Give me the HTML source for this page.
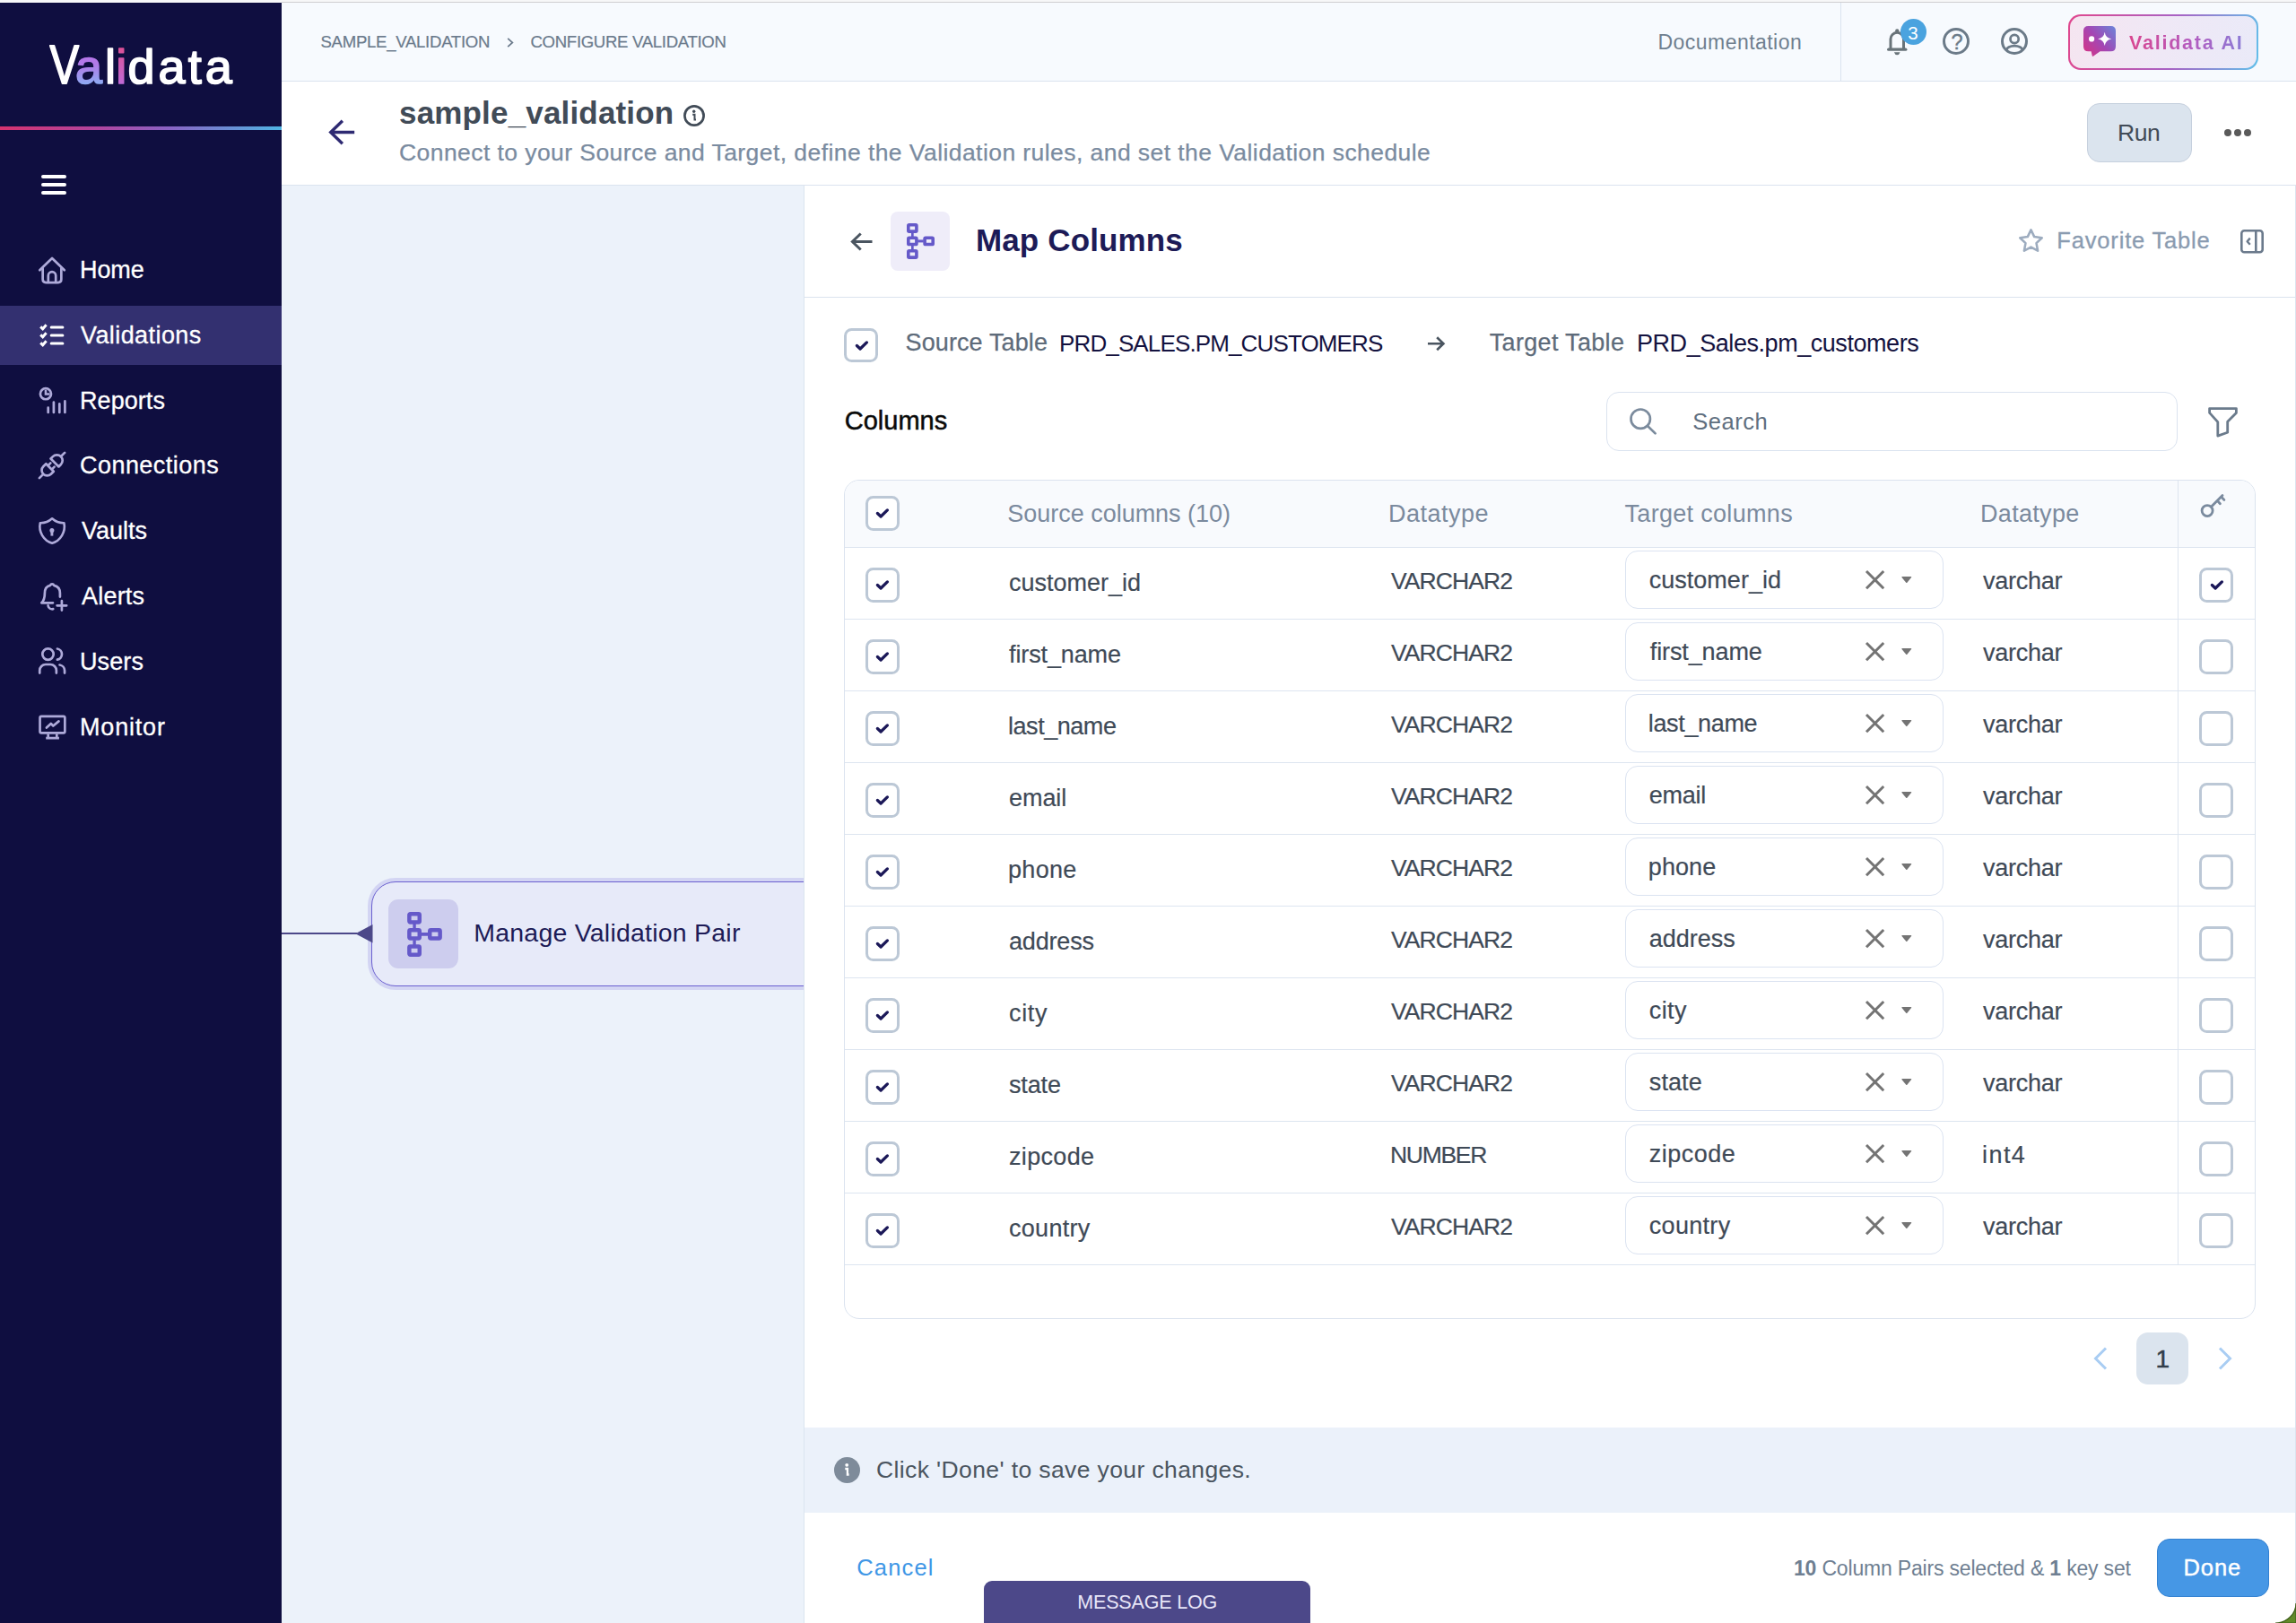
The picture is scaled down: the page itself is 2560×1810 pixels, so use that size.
<!DOCTYPE html><html lang="en"><head><meta charset="utf-8"><title>Validata - Map Columns</title><style>

*{box-sizing:border-box;margin:0;padding:0}
html,body{width:2560px;height:1810px;overflow:hidden;background:#fff}
body{position:relative;font-family:"Liberation Sans",sans-serif;-webkit-font-smoothing:antialiased}
.a{position:absolute}
.t{position:absolute;white-space:nowrap;line-height:1}
svg{position:absolute;overflow:visible}
.cb{position:absolute;width:38px;height:39px;border:3px solid #bcc8d6;border-radius:8.5px;background:#fff}
.sel{position:absolute;left:1812px;width:354.5px;height:64.5px;border:1.5px solid #dbe3f1;border-radius:14px;background:#fff}
.rl{position:absolute;left:942px;width:1572px;height:1px;background:#dde5f0}

</style></head><body>
<div class="a" style="left:0;top:0;width:2560px;height:3px;background:#f7f7f8"></div>
<div class="a" style="left:314px;top:2px;width:2246px;height:1px;background:#cfcfd1"></div>
<div class="a" style="left:0;top:3px;width:314px;height:1807px;background:#0f0e40"></div>
<div class="a" style="left:0;top:141px;width:314px;height:4px;background:linear-gradient(90deg,#d6336f 0%,#b0459f 35%,#8a63c4 60%,#4fb4e3 100%)"></div>
<div class="a" style="left:0;top:341px;width:314px;height:66px;background:#333070"></div>
<div class="a" style="left:46px;top:195px;width:28px;height:4px;border-radius:2px;background:#fff"></div>
<div class="a" style="left:46px;top:204px;width:28px;height:4px;border-radius:2px;background:#fff"></div>
<div class="a" style="left:46px;top:213px;width:28px;height:4px;border-radius:2px;background:#fff"></div>
<div class="a" style="left:314px;top:3px;width:2246px;height:87px;background:#f7fafe"></div>
<div class="a" style="left:314px;top:90px;width:2246px;height:1px;background:#dbe3ef"></div>
<div class="a" style="left:2052px;top:3px;width:1px;height:87px;background:#dbe3ef"></div>
<div class="a" style="left:314px;top:91px;width:2246px;height:115px;background:#fff"></div>
<div class="a" style="left:314px;top:206px;width:2246px;height:1px;background:#dbe3ef"></div>
<div class="a" style="left:314px;top:207px;width:582px;height:1603px;background:#ecf2fa"></div>
<div class="a" style="left:896px;top:207px;width:1664px;height:1603px;background:#fff;border-left:1px solid #dbe4ef"></div>
<div class="a" style="left:2559px;top:206px;width:1px;height:1604px;background:#dbe4ef"></div>
<div class="a" style="left:897px;top:331px;width:1662px;height:1px;background:#dbe3ef"></div>
<svg style="left:0;top:0" width="314" height="900" viewBox="0 0 314 900"><g fill="none" stroke="#aeaad9" stroke-width="2.7" stroke-linecap="round" stroke-linejoin="round"><path d="M44.3 301.3 L58.05 288 L71.8 301.3"/><path d="M47.65 299.6 V311.6 Q47.65 315.05 51.1 315.05 H64.9 Q68.35 315.05 68.35 311.6 V299.6"/><path d="M53.8 314.8 V307.4 A4.2 4.2 0 0 1 62.2 307.4 V314.8"/><circle cx="50.95" cy="439.2" r="6.05"/><path d="M50.95 434.8 V439.5 H55.4" stroke-width="2.5" stroke-linecap="butt" stroke-linejoin="miter"/><path d="M53.7 454.7 V459.9 M59.9 448.6 V459.9 M66.3 450.4 V459.9 M72.4 447.4 V459.9"/><g transform="translate(43.9 533.1) rotate(-45)"><path d="M0 0 H6"/><path d="M16.5 -6 H12.2 A6 6 0 0 0 12.2 6 H16.5 Z"/><path d="M16.8 -3 H20.6 M16.8 3 H20.6"/><path d="M24.2 -6.3 H27.6 A6.3 6.3 0 0 1 27.6 6.3 H24.2 Z"/><path d="M34 0 H39.9"/></g><path d="M58.1 578.3 A19 19 0 0 0 71.4 583.2 A19.5 19.5 0 0 1 58.1 605.8 A19.5 19.5 0 0 1 44.8 583.2 A19 19 0 0 0 58.1 578.3 Z" stroke-width="2.6"/><circle cx="57.9" cy="591.6" r="2.5" fill="#aeaad9" stroke="none"/><path d="M57.9 592 V597.6" stroke-linecap="butt" stroke-width="2.9"/><path d="M66.9 665.6 V661.5 C66.9 656.5 64 653.7 60.2 652.9 C59.5 650.9 56.7 650.9 56 652.9 C52.3 653.7 49.9 656.5 49.9 661.5 C49.9 667 48.9 670 46.3 672.3 H59"/><path d="M53.6 675.4 C54.2 678.6 57 679.6 59.2 679.2"/><path d="M63.6 675.3 H74.2 M68.9 670 V680.6"/><circle cx="53.5" cy="729.6" r="6.2"/><path d="M44.25 750.6 V747.6 A6.6 6.6 0 0 1 50.85 741 H56.25 A6.6 6.6 0 0 1 62.85 747.6 V750.6"/><path d="M63.9 723.5 A6.2 6.2 0 0 1 63.9 735.7"/><path d="M66.5 741.5 A6.6 6.6 0 0 1 72.05 747.8 V750.6"/><rect x="44.55" y="798.85" width="27.8" height="18.6" rx="1.6"/><path d="M53.7 818.5 V823 M63.3 818.5 V823 M51.2 823.1 H65.9" stroke-linecap="butt"/><path d="M51.9 811.5 L56.8 807 L59.3 809.5 L65.5 804.4"/></g><g fill="none" stroke="#fff" stroke-width="3" stroke-linecap="round" stroke-linejoin="miter"><path d="M57.2 364.9 H69.9"/><path d="M45.2 364.4 L47.7 366.8 L51.6 362.3" stroke-linecap="butt"/><path d="M57.2 373.9 H69.9"/><path d="M45.2 373.4 L47.7 375.8 L51.6 371.3" stroke-linecap="butt"/><path d="M57.2 382.9 H69.9"/><path d="M45.2 382.4 L47.7 384.8 L51.6 380.3" stroke-linecap="butt"/></g></svg>
<svg style="left:365.6px;top:133.4px" width="29.2" height="29" viewBox="0 0 29.2 29" ><path d="M29.2 14.5 H2.72 M15.86 1.7 L2.72 14.5 L15.86 27.3" fill="none" stroke="#2e2a72" stroke-width="3.4" stroke-linejoin="miter"/></svg>
<svg style="left:761.5px;top:116.5px" width="24" height="24" viewBox="0 0 24 24"><circle cx="12" cy="12" r="10.6" fill="none" stroke="#414b57" stroke-width="2.7"/><circle cx="11.7" cy="7.2" r="1.7" fill="#414b57"/><path d="M10.2 10.8 H12.5 V16.4 H14" fill="none" stroke="#414b57" stroke-width="2"/></svg>
<svg style="left:565px;top:41.5px" width="8" height="11" viewBox="0 0 8 11"><path d="M1.2 0.8 L6.4 5.5 L1.2 10.2" fill="none" stroke="#6b7a8c" stroke-width="1.7"/></svg>
<svg style="left:2103.65px;top:31.9px" width="22.5" height="29.2" viewBox="0 0 22.5 29.2"><g fill="none" stroke="#687379" stroke-linecap="round" stroke-linejoin="round"><path d="M4 21.8 V11.6 A7.25 7.25 0 0 1 18.5 11.6 V21.8" stroke-width="3"/><path d="M1.7 23.2 H20.8" stroke-width="3.3"/></g><circle cx="11.25" cy="2.3" r="2.1" fill="#687379"/><path d="M7.9 26.2 H14.6 Q13.6 29.2 11.25 29.2 Q8.9 29.2 7.9 26.2 Z" fill="#687379"/></svg>
<div class="a" style="left:2119px;top:21px;width:29px;height:29px;border-radius:50%;background:#4aa3df"></div>
<div class="a" style="left:2166px;top:31px;width:30px;height:30px;border-radius:50%;border:3px solid #6b7a88"></div>
<svg style="left:2231px;top:31px" width="30" height="30" viewBox="0 0 30 30"><defs><clipPath id="uc"><circle cx="15" cy="15" r="14"/></clipPath></defs><g fill="none" stroke="#6b7a88"><circle cx="15" cy="15" r="13.5" stroke-width="3"/><circle cx="15.1" cy="12.5" r="4.6" stroke-width="2.7"/><ellipse cx="15.1" cy="24.7" rx="8.8" ry="4.6" stroke-width="2.7" clip-path="url(#uc)"/></g></svg>
<div class="a" style="left:2306px;top:16px;width:212px;height:62px;border-radius:14px;background:linear-gradient(100deg,#e0468d 0%,#a862c4 55%,#62c0ea 100%)"></div>
<div class="a" style="left:2307.7px;top:17.7px;width:208.6px;height:58.6px;border-radius:12.4px;background:linear-gradient(100deg,#f5e5f0 0%,#efe8f6 50%,#eaeaf8 100%)"></div>
<svg style="left:2323px;top:28.9px" width="36" height="34" viewBox="0 0 36 34"><defs><linearGradient id="cg" x1="0" y1="0.9" x2="1" y2="0.1"><stop offset="0" stop-color="#d63384"/><stop offset="0.5" stop-color="#a347b4"/><stop offset="1" stop-color="#6f7fd6"/></linearGradient></defs><path d="M5.5 0 H30.5 Q36 0 36 5.5 V22.7 Q36 28.2 30.5 28.2 H18.6 L11.2 33.6 Q10 34.4 9.7 33 L8.6 28.2 H5.5 Q0 28.2 0 22.7 V5.5 Q0 0 5.5 0 Z" fill="url(#cg)"/><circle cx="9.1" cy="14.4" r="3.1" fill="#fff"/><path d="M23.7 6.8 Q24.6 13.4 31.3 14.4 Q24.6 15.4 23.7 22 Q22.8 15.4 16.1 14.4 Q22.8 13.4 23.7 6.8 Z" fill="#fff"/></svg>
<div class="a" style="left:2327px;top:115px;width:117px;height:66px;border-radius:14px;background:#dbe4ee;border:1.5px solid #c6d0de"></div>
<div class="a" style="left:2480px;top:143.5px;width:8px;height:8px;border-radius:50%;background:#5a5a5a"></div>
<div class="a" style="left:2491px;top:143.5px;width:8px;height:8px;border-radius:50%;background:#5a5a5a"></div>
<div class="a" style="left:2502px;top:143.5px;width:8px;height:8px;border-radius:50%;background:#5a5a5a"></div>
<svg style="left:54px;top:30px" width="220" height="80" viewBox="0 0 220 80"><defs><linearGradient id="lga" x1="0.2" y1="0" x2="0.35" y2="1"><stop offset="0" stop-color="#c565ea"/><stop offset="0.5" stop-color="#b07be8"/><stop offset="1" stop-color="#78c8fa"/></linearGradient><linearGradient id="lgi" x1="0" y1="0" x2="0" y2="1"><stop offset="0" stop-color="#e8467f"/><stop offset="0.4" stop-color="#d458a8"/><stop offset="1" stop-color="#b772ea"/></linearGradient></defs><text y="63" font-family="Liberation Sans, sans-serif" font-size="54" stroke-width="1.7" stroke-linejoin="round" fill="#fff" stroke="#fff" x="1.4 30 63 75.3 88.6 122.5 155.8 174.8"><tspan font-size="60.5" stroke-width="1.9" textLength="32.6" lengthAdjust="spacingAndGlyphs">V</tspan><tspan fill="url(#lga)" stroke="url(#lga)">a</tspan>l<tspan fill="url(#lgi)" stroke="url(#lgi)">i</tspan>data</text></svg>
<div class="a" style="left:314px;top:207px;width:582px;height:1603px;overflow:hidden">
<div class="a" style="left:0;top:833px;width:84px;height:2px;background:#4c4889"></div>
<div class="a" style="left:96px;top:772px;width:600px;height:125px;border-radius:31px;background:#d3d5f3"></div>
<div class="a" style="left:100px;top:776px;width:600px;height:117px;border-radius:27px;background:#e7eaf9;border:1.5px solid #6a5fd0"></div>
<div class="a" style="left:119px;top:796px;width:78px;height:77px;border-radius:11px;background:#cdcdee"></div>
<svg style="left:140px;top:810px" width="39" height="50" viewBox="0 0 31 40" ><g fill="none" stroke="#6559c9" stroke-width="3.58" stroke-linejoin="round"><rect x="1.79" y="1.79" width="9.12" height="7.32" rx="0.9"/><rect x="1.79" y="16.24" width="9.12" height="7.32" rx="0.9"/><rect x="1.79" y="30.79" width="9.12" height="7.32" rx="0.9"/><rect x="20.09" y="16.24" width="9.12" height="7.32" rx="0.9"/><path d="M6.35 10.4 V15 M6.35 24.9 V29.5" stroke-width="2.7"/><path d="M12.2 19.9 H18.8" stroke-width="3"/></g></svg>
<svg style="left:81.5px;top:824px" width="19.5" height="20.6" viewBox="0 0 19.5 20.6"><path d="M0.3 10.3 L19.5 0 L19.5 20.6 Z" fill="#4c4889"/></svg>
</div>
<svg style="left:948.2px;top:258.7px" width="24.5" height="21" viewBox="0 0 24.5 21" ><path d="M24.5 10.5 H2.4000000000000004 M11.7 1.5 L2.4000000000000004 10.5 L11.7 19.5" fill="none" stroke="#4a5560" stroke-width="3" stroke-linejoin="miter"/></svg>
<div class="a" style="left:993px;top:236px;width:66px;height:66px;border-radius:8px;background:#efedf9"></div>
<svg style="left:1011.2px;top:249px" width="31" height="40" viewBox="0 0 31 40" ><g fill="none" stroke="#6559c9" stroke-width="3.60" stroke-linejoin="round"><rect x="1.80" y="1.80" width="9.10" height="7.30" rx="0.9"/><rect x="1.80" y="16.25" width="9.10" height="7.30" rx="0.9"/><rect x="1.80" y="30.80" width="9.10" height="7.30" rx="0.9"/><rect x="20.10" y="16.25" width="9.10" height="7.30" rx="0.9"/><path d="M6.35 10.4 V15 M6.35 24.9 V29.5" stroke-width="2.7"/><path d="M12.2 19.9 H18.8" stroke-width="3"/></g></svg>
<svg style="left:2251px;top:255px" width="27" height="26" viewBox="1.5 1.6 21 20.1" ><path d="M12 2.6 L14.9 8.6 L21.5 9.5 L16.7 14.1 L17.9 20.7 L12 17.5 L6.1 20.7 L7.3 14.1 L2.5 9.5 L9.1 8.6 Z" fill="none" stroke="#9dacbf" stroke-width="2" stroke-linejoin="round"/></svg>
<svg style="left:2498px;top:256px" width="26" height="26.5" viewBox="0 0 26 26.5" ><g fill="none" stroke="#6b7a8c" stroke-width="2.6" stroke-linejoin="round"><rect x="1.3" y="1.3" width="23.4" height="23.9" rx="3"/><path d="M17.3 1.3 V25.2"/><path d="M10.8 9.6 L7.6 13.2 L10.8 16.8" stroke-width="2.4"/></g></svg>
<div class="cb" style="left:941px;top:366px;height:38px"></div><svg style="left:952.5px;top:379px" width="16" height="13" viewBox="0 0 16 13"><path d="M2.4 6.5 L6.1 10 L13.4 2.9" fill="none" stroke="#1b1858" stroke-width="3.3" stroke-linecap="round" stroke-linejoin="round"/></svg>
<svg style="left:1592px;top:375px" width="19.5" height="16.5" viewBox="0 0 19.5 16.5" ><path d="M0 8.25 H17.42 M10.21 1.3 L17.42 8.25 L10.21 15.2" fill="none" stroke="#4a5560" stroke-width="2.6" stroke-linejoin="miter"/></svg>
<div class="a" style="left:1791px;top:437px;width:637px;height:66px;border:1.5px solid #dbe3ef;border-radius:14px;background:#fff"></div>
<svg style="left:1817px;top:454.8px" width="30" height="29.5" viewBox="0 0 30 29.5" ><g fill="none" stroke="#7b8b9d" stroke-width="2.7"><circle cx="12.2" cy="12.2" r="10.7"/><path d="M20 20 L28.6 28.4" stroke-linecap="round"/></g></svg>
<svg style="left:2462.4px;top:453.7px" width="33" height="34" viewBox="0 0 33 34" ><path d="M1.6 1.6 H31.4 V6.4 L21.7 16.2 V28.3 L10.8 32.1 V16.6 L1.6 6.4 Z" fill="none" stroke="#6b7b8c" stroke-width="2.8" stroke-linejoin="round"/></svg>
<div class="a" style="left:941px;top:535px;width:1574px;height:936px;border:1.5px solid #dbe3ef;border-radius:17px;background:#fff;overflow:hidden"><div style="height:74px;background:#f8fafd"></div></div>
<div class="rl" style="top:610px"></div>
<div class="cb" style="left:964.5px;top:553px;height:39px"></div><svg style="left:976.0px;top:566px" width="16" height="13" viewBox="0 0 16 13"><path d="M2.4 6.5 L6.1 10 L13.4 2.9" fill="none" stroke="#1b1858" stroke-width="3.3" stroke-linecap="round" stroke-linejoin="round"/></svg>
<div class="rl" style="top:690px"></div>
<div class="cb" style="left:964.5px;top:633px;height:39px"></div><svg style="left:976.0px;top:646px" width="16" height="13" viewBox="0 0 16 13"><path d="M2.4 6.5 L6.1 10 L13.4 2.9" fill="none" stroke="#1b1858" stroke-width="3.3" stroke-linecap="round" stroke-linejoin="round"/></svg>
<div class="sel" style="top:614px"></div>
<svg style="left:2079.6px;top:635.6px" width="21.2" height="21.2" viewBox="0 0 21.2 21.2" ><path d="M1 1 L20.2 20.2 M20.2 1 L1 20.2" stroke="#747474" stroke-width="3" fill="none"/></svg>
<svg style="left:2120.4px;top:643px" width="11.6" height="7.4" viewBox="0 0 12 7.6"><path d="M0.3 0.8 Q0.3 0 1.2 0 L10.8 0 Q11.7 0 11.7 0.8 L6.6 6.9 Q6 7.5 5.4 6.9 Z" fill="#747474"/></svg>
<div class="cb" style="left:2452px;top:633px;height:39px"></div><svg style="left:2463.5px;top:646px" width="16" height="13" viewBox="0 0 16 13"><path d="M2.4 6.5 L6.1 10 L13.4 2.9" fill="none" stroke="#1b1858" stroke-width="3.3" stroke-linecap="round" stroke-linejoin="round"/></svg>
<div class="rl" style="top:770px"></div>
<div class="cb" style="left:964.5px;top:713px;height:39px"></div><svg style="left:976.0px;top:726px" width="16" height="13" viewBox="0 0 16 13"><path d="M2.4 6.5 L6.1 10 L13.4 2.9" fill="none" stroke="#1b1858" stroke-width="3.3" stroke-linecap="round" stroke-linejoin="round"/></svg>
<div class="sel" style="top:694px"></div>
<svg style="left:2079.6px;top:715.6px" width="21.2" height="21.2" viewBox="0 0 21.2 21.2" ><path d="M1 1 L20.2 20.2 M20.2 1 L1 20.2" stroke="#747474" stroke-width="3" fill="none"/></svg>
<svg style="left:2120.4px;top:723px" width="11.6" height="7.4" viewBox="0 0 12 7.6"><path d="M0.3 0.8 Q0.3 0 1.2 0 L10.8 0 Q11.7 0 11.7 0.8 L6.6 6.9 Q6 7.5 5.4 6.9 Z" fill="#747474"/></svg>
<div class="cb" style="left:2452px;top:713px;height:39px"></div>
<div class="rl" style="top:850px"></div>
<div class="cb" style="left:964.5px;top:793px;height:39px"></div><svg style="left:976.0px;top:806px" width="16" height="13" viewBox="0 0 16 13"><path d="M2.4 6.5 L6.1 10 L13.4 2.9" fill="none" stroke="#1b1858" stroke-width="3.3" stroke-linecap="round" stroke-linejoin="round"/></svg>
<div class="sel" style="top:774px"></div>
<svg style="left:2079.6px;top:795.6px" width="21.2" height="21.2" viewBox="0 0 21.2 21.2" ><path d="M1 1 L20.2 20.2 M20.2 1 L1 20.2" stroke="#747474" stroke-width="3" fill="none"/></svg>
<svg style="left:2120.4px;top:803px" width="11.6" height="7.4" viewBox="0 0 12 7.6"><path d="M0.3 0.8 Q0.3 0 1.2 0 L10.8 0 Q11.7 0 11.7 0.8 L6.6 6.9 Q6 7.5 5.4 6.9 Z" fill="#747474"/></svg>
<div class="cb" style="left:2452px;top:793px;height:39px"></div>
<div class="rl" style="top:930px"></div>
<div class="cb" style="left:964.5px;top:873px;height:39px"></div><svg style="left:976.0px;top:886px" width="16" height="13" viewBox="0 0 16 13"><path d="M2.4 6.5 L6.1 10 L13.4 2.9" fill="none" stroke="#1b1858" stroke-width="3.3" stroke-linecap="round" stroke-linejoin="round"/></svg>
<div class="sel" style="top:854px"></div>
<svg style="left:2079.6px;top:875.6px" width="21.2" height="21.2" viewBox="0 0 21.2 21.2" ><path d="M1 1 L20.2 20.2 M20.2 1 L1 20.2" stroke="#747474" stroke-width="3" fill="none"/></svg>
<svg style="left:2120.4px;top:883px" width="11.6" height="7.4" viewBox="0 0 12 7.6"><path d="M0.3 0.8 Q0.3 0 1.2 0 L10.8 0 Q11.7 0 11.7 0.8 L6.6 6.9 Q6 7.5 5.4 6.9 Z" fill="#747474"/></svg>
<div class="cb" style="left:2452px;top:873px;height:39px"></div>
<div class="rl" style="top:1010px"></div>
<div class="cb" style="left:964.5px;top:953px;height:39px"></div><svg style="left:976.0px;top:966px" width="16" height="13" viewBox="0 0 16 13"><path d="M2.4 6.5 L6.1 10 L13.4 2.9" fill="none" stroke="#1b1858" stroke-width="3.3" stroke-linecap="round" stroke-linejoin="round"/></svg>
<div class="sel" style="top:934px"></div>
<svg style="left:2079.6px;top:955.6px" width="21.2" height="21.2" viewBox="0 0 21.2 21.2" ><path d="M1 1 L20.2 20.2 M20.2 1 L1 20.2" stroke="#747474" stroke-width="3" fill="none"/></svg>
<svg style="left:2120.4px;top:963px" width="11.6" height="7.4" viewBox="0 0 12 7.6"><path d="M0.3 0.8 Q0.3 0 1.2 0 L10.8 0 Q11.7 0 11.7 0.8 L6.6 6.9 Q6 7.5 5.4 6.9 Z" fill="#747474"/></svg>
<div class="cb" style="left:2452px;top:953px;height:39px"></div>
<div class="rl" style="top:1090px"></div>
<div class="cb" style="left:964.5px;top:1033px;height:39px"></div><svg style="left:976.0px;top:1046px" width="16" height="13" viewBox="0 0 16 13"><path d="M2.4 6.5 L6.1 10 L13.4 2.9" fill="none" stroke="#1b1858" stroke-width="3.3" stroke-linecap="round" stroke-linejoin="round"/></svg>
<div class="sel" style="top:1014px"></div>
<svg style="left:2079.6px;top:1035.6px" width="21.2" height="21.2" viewBox="0 0 21.2 21.2" ><path d="M1 1 L20.2 20.2 M20.2 1 L1 20.2" stroke="#747474" stroke-width="3" fill="none"/></svg>
<svg style="left:2120.4px;top:1043px" width="11.6" height="7.4" viewBox="0 0 12 7.6"><path d="M0.3 0.8 Q0.3 0 1.2 0 L10.8 0 Q11.7 0 11.7 0.8 L6.6 6.9 Q6 7.5 5.4 6.9 Z" fill="#747474"/></svg>
<div class="cb" style="left:2452px;top:1033px;height:39px"></div>
<div class="rl" style="top:1170px"></div>
<div class="cb" style="left:964.5px;top:1113px;height:39px"></div><svg style="left:976.0px;top:1126px" width="16" height="13" viewBox="0 0 16 13"><path d="M2.4 6.5 L6.1 10 L13.4 2.9" fill="none" stroke="#1b1858" stroke-width="3.3" stroke-linecap="round" stroke-linejoin="round"/></svg>
<div class="sel" style="top:1094px"></div>
<svg style="left:2079.6px;top:1115.6px" width="21.2" height="21.2" viewBox="0 0 21.2 21.2" ><path d="M1 1 L20.2 20.2 M20.2 1 L1 20.2" stroke="#747474" stroke-width="3" fill="none"/></svg>
<svg style="left:2120.4px;top:1123px" width="11.6" height="7.4" viewBox="0 0 12 7.6"><path d="M0.3 0.8 Q0.3 0 1.2 0 L10.8 0 Q11.7 0 11.7 0.8 L6.6 6.9 Q6 7.5 5.4 6.9 Z" fill="#747474"/></svg>
<div class="cb" style="left:2452px;top:1113px;height:39px"></div>
<div class="rl" style="top:1250px"></div>
<div class="cb" style="left:964.5px;top:1193px;height:39px"></div><svg style="left:976.0px;top:1206px" width="16" height="13" viewBox="0 0 16 13"><path d="M2.4 6.5 L6.1 10 L13.4 2.9" fill="none" stroke="#1b1858" stroke-width="3.3" stroke-linecap="round" stroke-linejoin="round"/></svg>
<div class="sel" style="top:1174px"></div>
<svg style="left:2079.6px;top:1195.6px" width="21.2" height="21.2" viewBox="0 0 21.2 21.2" ><path d="M1 1 L20.2 20.2 M20.2 1 L1 20.2" stroke="#747474" stroke-width="3" fill="none"/></svg>
<svg style="left:2120.4px;top:1203px" width="11.6" height="7.4" viewBox="0 0 12 7.6"><path d="M0.3 0.8 Q0.3 0 1.2 0 L10.8 0 Q11.7 0 11.7 0.8 L6.6 6.9 Q6 7.5 5.4 6.9 Z" fill="#747474"/></svg>
<div class="cb" style="left:2452px;top:1193px;height:39px"></div>
<div class="rl" style="top:1330px"></div>
<div class="cb" style="left:964.5px;top:1273px;height:39px"></div><svg style="left:976.0px;top:1286px" width="16" height="13" viewBox="0 0 16 13"><path d="M2.4 6.5 L6.1 10 L13.4 2.9" fill="none" stroke="#1b1858" stroke-width="3.3" stroke-linecap="round" stroke-linejoin="round"/></svg>
<div class="sel" style="top:1254px"></div>
<svg style="left:2079.6px;top:1275.6px" width="21.2" height="21.2" viewBox="0 0 21.2 21.2" ><path d="M1 1 L20.2 20.2 M20.2 1 L1 20.2" stroke="#747474" stroke-width="3" fill="none"/></svg>
<svg style="left:2120.4px;top:1283px" width="11.6" height="7.4" viewBox="0 0 12 7.6"><path d="M0.3 0.8 Q0.3 0 1.2 0 L10.8 0 Q11.7 0 11.7 0.8 L6.6 6.9 Q6 7.5 5.4 6.9 Z" fill="#747474"/></svg>
<div class="cb" style="left:2452px;top:1273px;height:39px"></div>
<div class="rl" style="top:1410px"></div>
<div class="cb" style="left:964.5px;top:1353px;height:39px"></div><svg style="left:976.0px;top:1366px" width="16" height="13" viewBox="0 0 16 13"><path d="M2.4 6.5 L6.1 10 L13.4 2.9" fill="none" stroke="#1b1858" stroke-width="3.3" stroke-linecap="round" stroke-linejoin="round"/></svg>
<div class="sel" style="top:1334px"></div>
<svg style="left:2079.6px;top:1355.6px" width="21.2" height="21.2" viewBox="0 0 21.2 21.2" ><path d="M1 1 L20.2 20.2 M20.2 1 L1 20.2" stroke="#747474" stroke-width="3" fill="none"/></svg>
<svg style="left:2120.4px;top:1363px" width="11.6" height="7.4" viewBox="0 0 12 7.6"><path d="M0.3 0.8 Q0.3 0 1.2 0 L10.8 0 Q11.7 0 11.7 0.8 L6.6 6.9 Q6 7.5 5.4 6.9 Z" fill="#747474"/></svg>
<div class="cb" style="left:2452px;top:1353px;height:39px"></div>
<div class="a" style="left:2428px;top:536px;width:1px;height:874px;background:#dde5f0"></div>
<svg style="left:2453px;top:551px" width="28" height="27" viewBox="0 0 28 27" ><g fill="none" stroke="#7a8a9e" stroke-width="2.8" stroke-linecap="round"><circle cx="8.1" cy="18.6" r="6"/><path d="M12.4 14.3 L25 1.4 M19.4 7.5 L22.4 10.7 M23.6 3.1 L26.9 6.4"/></g></svg>
<div class="a" style="left:2382px;top:1486px;width:58px;height:58px;border-radius:13px;background:#dbe4ee"></div>
<svg style="left:2334px;top:1502px" width="16" height="26" viewBox="0 0 16 26"><path d="M14 1.5 L2.5 13 L14 24.5" fill="none" stroke="#a9cdf3" stroke-width="3"/></svg>
<svg style="left:2473px;top:1502px" width="16" height="26" viewBox="0 0 16 26"><path d="M2 1.5 L13.5 13 L2 24.5" fill="none" stroke="#a9cdf3" stroke-width="3"/></svg>
<div class="a" style="left:897px;top:1592px;width:1662px;height:95px;background:#ebf1fa"></div>
<div class="a" style="left:930px;top:1625px;width:29px;height:29px;border-radius:50%;background:#7e8b9a"></div>
<svg style="left:930px;top:1625px" width="29" height="29" viewBox="0 0 29 29"><circle cx="14.2" cy="8.8" r="1.9" fill="#fff"/><path d="M12.3 13 L14.9 13 L14.9 19.5 L16.6 19.5" fill="none" stroke="#fff" stroke-width="2.3"/></svg>
<div class="a" style="left:2405px;top:1716px;width:125px;height:65px;border-radius:14px;background:#4697e5;border:1px solid #3482d2"></div>
<div class="a" style="left:1097px;top:1763px;width:364px;height:47px;border-radius:9px 9px 0 0;background:#4c4889"></div>
<svg style="left:2537px;top:1788px" width="23" height="22" viewBox="0 0 23 22"><path d="M23 0 L23 22 L0 22 A23 22 0 0 0 23 0 Z" fill="#638a2a" stroke="#3f5f1a" stroke-width="1.2"/></svg>
<span class="t" id="t0" style="left:89.00px;top:288.00px;font-size:27px;color:#ffffff;letter-spacing:-0.077px;-webkit-text-stroke:0.3px #fff;">Home</span>
<span class="t" id="t1" style="left:90.00px;top:361.00px;font-size:27px;color:#ffffff;letter-spacing:0.416px;-webkit-text-stroke:0.3px #fff;">Validations</span>
<span class="t" id="t2" style="left:89.00px;top:434.00px;font-size:27px;color:#ffffff;letter-spacing:0.059px;-webkit-text-stroke:0.3px #fff;">Reports</span>
<span class="t" id="t3" style="left:89.00px;top:506.00px;font-size:27px;color:#ffffff;letter-spacing:0.454px;-webkit-text-stroke:0.3px #fff;">Connections</span>
<span class="t" id="t4" style="left:91.00px;top:579.00px;font-size:27px;color:#ffffff;letter-spacing:0.011px;-webkit-text-stroke:0.3px #fff;">Vaults</span>
<span class="t" id="t5" style="left:91.00px;top:652.00px;font-size:27px;color:#ffffff;letter-spacing:0.214px;-webkit-text-stroke:0.3px #fff;">Alerts</span>
<span class="t" id="t6" style="left:89.00px;top:725.00px;font-size:27px;color:#ffffff;letter-spacing:0.096px;-webkit-text-stroke:0.3px #fff;">Users</span>
<span class="t" id="t7" style="left:89.00px;top:798.00px;font-size:27px;color:#ffffff;letter-spacing:0.811px;-webkit-text-stroke:0.3px #fff;">Monitor</span>
<span class="t" id="t8" style="left:357.50px;top:38.00px;font-size:18.6px;color:#6b7a8c;letter-spacing:-0.292px;-webkit-text-stroke:0.2px #6b7a8c;">SAMPLE_VALIDATION</span>
<span class="t" id="t9" style="left:591.50px;top:38.00px;font-size:18.6px;color:#6b7a8c;letter-spacing:-0.323px;-webkit-text-stroke:0.2px #6b7a8c;">CONFIGURE VALIDATION</span>
<span class="t" id="t10" style="left:1848.50px;top:36.00px;font-size:23px;color:#6f7f8f;letter-spacing:0.458px;">Documentation</span>
<span class="t" id="t11" style="left:2127.20px;top:27.00px;font-size:20.5px;color:#ffffff;">3</span>
<span class="t" id="t12" style="left:2175.60px;top:36.00px;font-size:23.5px;color:#6b7a88;-webkit-text-stroke:0.4px #6b7a88;">?</span>
<span class="t" id="t13" style="left:2374.00px;top:38.00px;font-size:21.5px;color:#d0408f;font-weight:700;letter-spacing:1.780px;background:linear-gradient(90deg,#d9468f 0%,#b35cc0 55%,#8a7bd6 100%);-webkit-background-clip:text;background-clip:text;color:transparent;">Validata AI</span>
<span class="t" id="t14" style="left:445.00px;top:108.00px;font-size:35px;color:#414b57;font-weight:700;letter-spacing:0.172px;">sample_validation</span>
<span class="t" id="t15" style="left:445.00px;top:157.00px;font-size:26.5px;color:#7a8ba0;letter-spacing:0.431px;-webkit-text-stroke:0.25px #7a8ba0;">Connect to your Source and Target, define the Validation rules, and set the Validation schedule</span>
<span class="t" id="t16" style="left:2361.00px;top:135.00px;font-size:26.5px;color:#414b57;letter-spacing:-0.462px;">Run</span>
<span class="t" id="t17" style="left:1088.00px;top:250.00px;font-size:35px;color:#1d1b57;font-weight:700;letter-spacing:0.125px;">Map Columns</span>
<span class="t" id="t18" style="left:2293.30px;top:256.00px;font-size:25.5px;color:#8a9bb0;letter-spacing:0.831px;-webkit-text-stroke:0.3px #8a9bb0;">Favorite Table</span>
<span class="t" id="t19" style="left:1009.50px;top:369.00px;font-size:27px;color:#5e6b7a;letter-spacing:0.117px;-webkit-text-stroke:0.25px #5e6b7a;">Source Table</span>
<span class="t" id="t20" style="left:1181.00px;top:370.00px;font-size:26px;color:#14123f;letter-spacing:-0.867px;">PRD_SALES.PM_CUSTOMERS</span>
<span class="t" id="t21" style="left:1660.75px;top:369.00px;font-size:27px;color:#5e6b7a;letter-spacing:0.322px;-webkit-text-stroke:0.25px #5e6b7a;">Target Table</span>
<span class="t" id="t22" style="left:1825.00px;top:370.00px;font-size:27px;color:#14123f;letter-spacing:-0.449px;">PRD_Sales.pm_customers</span>
<span class="t" id="t23" style="left:941.75px;top:455.00px;font-size:29px;color:#0a0a0a;letter-spacing:0.010px;-webkit-text-stroke:0.5px #0a0a0a;">Columns</span>
<span class="t" id="t24" style="left:1887.25px;top:458.00px;font-size:25.5px;color:#5f6f80;letter-spacing:0.551px;">Search</span>
<span class="t" id="t25" style="left:1123.25px;top:560.00px;font-size:27px;color:#7b8a9e;letter-spacing:-0.017px;">Source columns (10)</span>
<span class="t" id="t26" style="left:1548.00px;top:560.00px;font-size:27px;color:#7b8a9e;letter-spacing:0.482px;">Datatype</span>
<span class="t" id="t27" style="left:1811.50px;top:560.00px;font-size:27px;color:#7b8a9e;letter-spacing:0.312px;">Target columns</span>
<span class="t" id="t28" style="left:2208.00px;top:560.00px;font-size:27px;color:#7b8a9e;letter-spacing:0.317px;">Datatype</span>
<span class="t" id="t29" style="left:1125.00px;top:637.00px;font-size:27px;color:#3f4a57;letter-spacing:0.007px;-webkit-text-stroke:0.2px #3f4a57;">customer_id</span>
<span class="t" id="t30" style="left:1551.00px;top:635.00px;font-size:26.5px;color:#3f4a57;letter-spacing:-0.923px;-webkit-text-stroke:0.2px #3f4a57;">VARCHAR2</span>
<span class="t" id="t31" style="left:1838.80px;top:634.00px;font-size:27px;color:#3f4a57;letter-spacing:0.007px;-webkit-text-stroke:0.2px #3f4a57;">customer_id</span>
<span class="t" id="t32" style="left:2211.00px;top:635.00px;font-size:27px;color:#3f4a57;letter-spacing:-0.239px;-webkit-text-stroke:0.2px #3f4a57;">varchar</span>
<span class="t" id="t33" style="left:1125.00px;top:717.00px;font-size:27px;color:#3f4a57;letter-spacing:-0.118px;-webkit-text-stroke:0.2px #3f4a57;">first_name</span>
<span class="t" id="t34" style="left:1551.00px;top:715.00px;font-size:26.5px;color:#3f4a57;letter-spacing:-0.923px;-webkit-text-stroke:0.2px #3f4a57;">VARCHAR2</span>
<span class="t" id="t35" style="left:1839.80px;top:714.00px;font-size:27px;color:#3f4a57;letter-spacing:-0.118px;-webkit-text-stroke:0.2px #3f4a57;">first_name</span>
<span class="t" id="t36" style="left:2211.00px;top:715.00px;font-size:27px;color:#3f4a57;letter-spacing:-0.239px;-webkit-text-stroke:0.2px #3f4a57;">varchar</span>
<span class="t" id="t37" style="left:1124.00px;top:797.00px;font-size:27px;color:#3f4a57;letter-spacing:-0.460px;-webkit-text-stroke:0.2px #3f4a57;">last_name</span>
<span class="t" id="t38" style="left:1551.00px;top:795.00px;font-size:26.5px;color:#3f4a57;letter-spacing:-0.923px;-webkit-text-stroke:0.2px #3f4a57;">VARCHAR2</span>
<span class="t" id="t39" style="left:1837.80px;top:794.00px;font-size:27px;color:#3f4a57;letter-spacing:-0.347px;-webkit-text-stroke:0.2px #3f4a57;">last_name</span>
<span class="t" id="t40" style="left:2211.00px;top:795.00px;font-size:27px;color:#3f4a57;letter-spacing:-0.239px;-webkit-text-stroke:0.2px #3f4a57;">varchar</span>
<span class="t" id="t41" style="left:1125.00px;top:877.00px;font-size:27px;color:#3f4a57;letter-spacing:-0.058px;-webkit-text-stroke:0.2px #3f4a57;">email</span>
<span class="t" id="t42" style="left:1551.00px;top:875.00px;font-size:26.5px;color:#3f4a57;letter-spacing:-0.923px;-webkit-text-stroke:0.2px #3f4a57;">VARCHAR2</span>
<span class="t" id="t43" style="left:1838.80px;top:874.00px;font-size:27px;color:#3f4a57;letter-spacing:-0.283px;-webkit-text-stroke:0.2px #3f4a57;">email</span>
<span class="t" id="t44" style="left:2211.00px;top:875.00px;font-size:27px;color:#3f4a57;letter-spacing:-0.239px;-webkit-text-stroke:0.2px #3f4a57;">varchar</span>
<span class="t" id="t45" style="left:1124.00px;top:957.00px;font-size:27px;color:#3f4a57;letter-spacing:0.302px;-webkit-text-stroke:0.2px #3f4a57;">phone</span>
<span class="t" id="t46" style="left:1551.00px;top:955.00px;font-size:26.5px;color:#3f4a57;letter-spacing:-0.923px;-webkit-text-stroke:0.2px #3f4a57;">VARCHAR2</span>
<span class="t" id="t47" style="left:1837.80px;top:954.00px;font-size:27px;color:#3f4a57;letter-spacing:0.077px;-webkit-text-stroke:0.2px #3f4a57;">phone</span>
<span class="t" id="t48" style="left:2211.00px;top:955.00px;font-size:27px;color:#3f4a57;letter-spacing:-0.239px;-webkit-text-stroke:0.2px #3f4a57;">varchar</span>
<span class="t" id="t49" style="left:1125.00px;top:1037.00px;font-size:27px;color:#3f4a57;letter-spacing:-0.177px;-webkit-text-stroke:0.2px #3f4a57;">address</span>
<span class="t" id="t50" style="left:1551.00px;top:1035.00px;font-size:26.5px;color:#3f4a57;letter-spacing:-0.923px;-webkit-text-stroke:0.2px #3f4a57;">VARCHAR2</span>
<span class="t" id="t51" style="left:1838.80px;top:1034.00px;font-size:27px;color:#3f4a57;letter-spacing:-0.027px;-webkit-text-stroke:0.2px #3f4a57;">address</span>
<span class="t" id="t52" style="left:2211.00px;top:1035.00px;font-size:27px;color:#3f4a57;letter-spacing:-0.239px;-webkit-text-stroke:0.2px #3f4a57;">varchar</span>
<span class="t" id="t53" style="left:1125.00px;top:1117.00px;font-size:27px;color:#3f4a57;letter-spacing:0.667px;-webkit-text-stroke:0.2px #3f4a57;">city</span>
<span class="t" id="t54" style="left:1551.00px;top:1115.00px;font-size:26.5px;color:#3f4a57;letter-spacing:-0.923px;-webkit-text-stroke:0.2px #3f4a57;">VARCHAR2</span>
<span class="t" id="t55" style="left:1838.80px;top:1114.00px;font-size:27px;color:#3f4a57;letter-spacing:0.367px;-webkit-text-stroke:0.2px #3f4a57;">city</span>
<span class="t" id="t56" style="left:2211.00px;top:1115.00px;font-size:27px;color:#3f4a57;letter-spacing:-0.239px;-webkit-text-stroke:0.2px #3f4a57;">varchar</span>
<span class="t" id="t57" style="left:1125.00px;top:1197.00px;font-size:27px;color:#3f4a57;letter-spacing:-0.137px;-webkit-text-stroke:0.2px #3f4a57;">state</span>
<span class="t" id="t58" style="left:1551.00px;top:1195.00px;font-size:26.5px;color:#3f4a57;letter-spacing:-0.923px;-webkit-text-stroke:0.2px #3f4a57;">VARCHAR2</span>
<span class="t" id="t59" style="left:1838.80px;top:1194.00px;font-size:27px;color:#3f4a57;letter-spacing:0.088px;-webkit-text-stroke:0.2px #3f4a57;">state</span>
<span class="t" id="t60" style="left:2211.00px;top:1195.00px;font-size:27px;color:#3f4a57;letter-spacing:-0.239px;-webkit-text-stroke:0.2px #3f4a57;">varchar</span>
<span class="t" id="t61" style="left:1125.00px;top:1277.00px;font-size:27px;color:#3f4a57;letter-spacing:0.320px;-webkit-text-stroke:0.2px #3f4a57;">zipcode</span>
<span class="t" id="t62" style="left:1550.00px;top:1275.00px;font-size:26.5px;color:#3f4a57;letter-spacing:-1.289px;-webkit-text-stroke:0.2px #3f4a57;">NUMBER</span>
<span class="t" id="t63" style="left:1838.80px;top:1274.00px;font-size:27px;color:#3f4a57;letter-spacing:0.470px;-webkit-text-stroke:0.2px #3f4a57;">zipcode</span>
<span class="t" id="t64" style="left:2210.00px;top:1275.00px;font-size:27px;color:#3f4a57;letter-spacing:1.451px;-webkit-text-stroke:0.2px #3f4a57;">int4</span>
<span class="t" id="t65" style="left:1125.00px;top:1357.00px;font-size:27px;color:#3f4a57;letter-spacing:0.301px;-webkit-text-stroke:0.2px #3f4a57;">country</span>
<span class="t" id="t66" style="left:1551.00px;top:1355.00px;font-size:26.5px;color:#3f4a57;letter-spacing:-0.923px;-webkit-text-stroke:0.2px #3f4a57;">VARCHAR2</span>
<span class="t" id="t67" style="left:1838.80px;top:1354.00px;font-size:27px;color:#3f4a57;letter-spacing:0.301px;-webkit-text-stroke:0.2px #3f4a57;">country</span>
<span class="t" id="t68" style="left:2211.00px;top:1355.00px;font-size:27px;color:#3f4a57;letter-spacing:-0.239px;-webkit-text-stroke:0.2px #3f4a57;">varchar</span>
<span class="t" id="t69" style="left:2403.60px;top:1502.00px;font-size:28px;color:#333e4a;-webkit-text-stroke:0.5px #333e4a;">1</span>
<span class="t" id="t70" style="left:977.00px;top:1626.00px;font-size:26.5px;color:#4a5560;letter-spacing:0.388px;">Click 'Done' to save your changes.</span>
<span class="t" id="t71" style="left:955.25px;top:1736.00px;font-size:25.5px;color:#3f97e6;letter-spacing:1.162px;">Cancel</span>
<span class="t" id="t72" style="left:2434.50px;top:1736.00px;font-size:25.5px;color:#ffffff;letter-spacing:0.944px;-webkit-text-stroke:0.45px #fff;">Done</span>
<span class="t" id="t73" style="left:1201.25px;top:1777.00px;font-size:21.5px;color:#e8e6f8;letter-spacing:-0.177px;">MESSAGE LOG</span>
<span class="t" id="t74" style="left:528.25px;top:1026.00px;font-size:28.5px;color:#1d1b57;letter-spacing:0.218px;">Manage Validation Pair</span>
<span class="t" id="t75" style="left:2000.00px;top:1738.00px;font-size:23px;color:#6f7f92;letter-spacing:-0.182px;"><b>10</b> Column Pairs selected &amp; <b>1</b> key set</span>
</body></html>
